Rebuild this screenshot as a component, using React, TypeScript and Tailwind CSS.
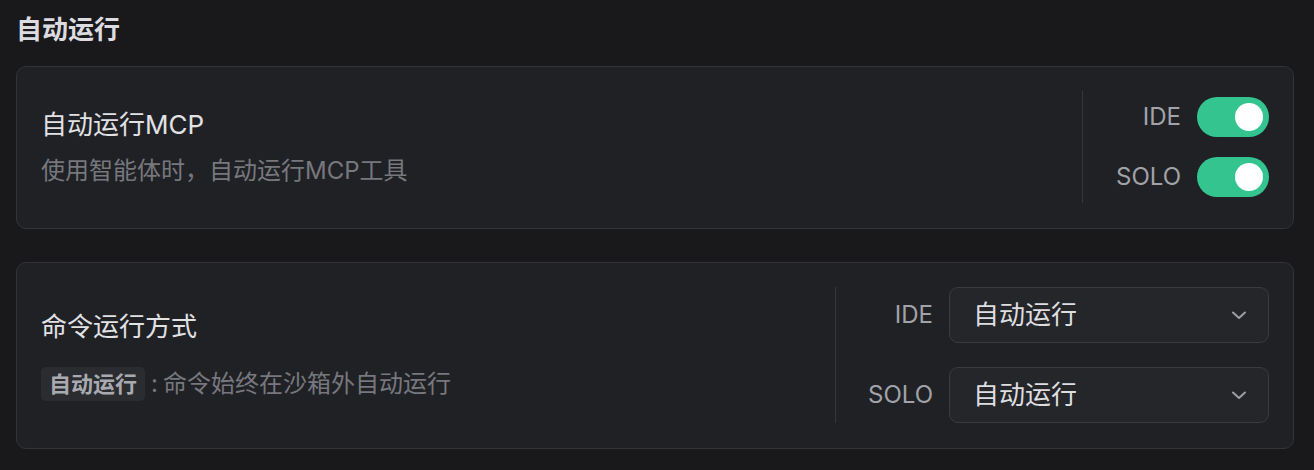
import React from "react";

const FONT = { fontFamily: "Inter, 'Noto Sans CJK SC', sans-serif" };

function Toggle() {
  return (
    <div className="flex h-[40px] w-[72px] items-center justify-end rounded-full bg-[#33c48f] pr-[6px]">
      <div className="h-[28px] w-[28px] rounded-full bg-white" />
    </div>
  );
}

function Chevron() {
  return (
    <svg width="16" height="16" viewBox="0 0 16 16" fill="none" className="shrink-0">
      <path d="M2 5.5 L8 11 L14 5.5" stroke="#9d9ea5" strokeWidth="2" strokeLinecap="round" strokeLinejoin="round" />
    </svg>
  );
}

function Select({ value }: { value: string }) {
  return (
    <div className="flex h-[56px] w-[320px] items-center justify-between rounded-[9px] border border-[#3a3b40] bg-[#25262a] pl-[23px] pr-[21px]">
      <span className="text-[26px] leading-none text-[#dedee1]">{value}</span>
      <Chevron />
    </div>
  );
}

export default function App() {
  return (
    <div style={FONT} className="min-h-[470px] w-full bg-[#19191c] pl-[16px] pr-[20px] pt-[12px] pb-[22px]">
      <h2 className="h-[36px] text-[26px] font-bold leading-[36px] text-[#dcdce0]">自动运行</h2>

      <div className="mt-[18px] flex rounded-[10px] border border-[#333439] bg-[#202125] px-[24px] pt-[24px] pb-[25px]">
        <div className="flex flex-1 flex-col justify-center pt-[2px]">
          <div className="text-[26px] leading-[36px] text-[#e2e2e5]">自动运行MCP</div>
          <div className="mt-[10px] text-[24px] leading-[36px] text-[#77787e]">使用智能体时，自动运行MCP工具</div>
        </div>
        <div className="h-[112px] w-px bg-[#36373c]" />
        <div className="flex flex-col justify-center gap-[20px] pl-[33px]">
          <div className="flex items-center justify-end gap-[16px]">
            <span className="text-[24px] leading-none text-[#a2a3a9]">IDE</span>
            <Toggle />
          </div>
          <div className="flex items-center justify-end gap-[16px]">
            <span className="text-[24px] leading-none text-[#a2a3a9]">SOLO</span>
            <Toggle />
          </div>
        </div>
      </div>

      <div className="mt-[33px] flex rounded-[10px] border border-[#333439] bg-[#202125] px-[24px] pt-[24px] pb-[25px]">
        <div className="flex flex-1 flex-col justify-center">
          <div className="text-[26px] leading-[36px] text-[#e2e2e5]">命令运行方式</div>
          <div className="mt-[22px] flex h-[34px] items-center">
            <span className="flex h-[34px] items-center rounded-[5px] bg-[#2b2c30] px-[8px] text-[22px] font-semibold leading-none text-[#a9aab0]">自动运行</span>
            <span className="ml-[6px] text-[24px] leading-none text-[#77787e]">:</span>
            <span className="ml-[5px] text-[24px] leading-none text-[#77787e]">命令始终在沙箱外自动运行</span>
          </div>
        </div>
        <div className="h-[136px] w-px bg-[#36373c]" />
        <div className="flex flex-col justify-center gap-[24px] pl-[32px]">
          <div className="flex items-center justify-end gap-[16px]">
            <span className="text-[24px] leading-none text-[#a2a3a9]">IDE</span>
            <Select value="自动运行" />
          </div>
          <div className="flex items-center justify-end gap-[16px]">
            <span className="text-[24px] leading-none text-[#a2a3a9]">SOLO</span>
            <Select value="自动运行" />
          </div>
        </div>
      </div>
    </div>
  );
}
